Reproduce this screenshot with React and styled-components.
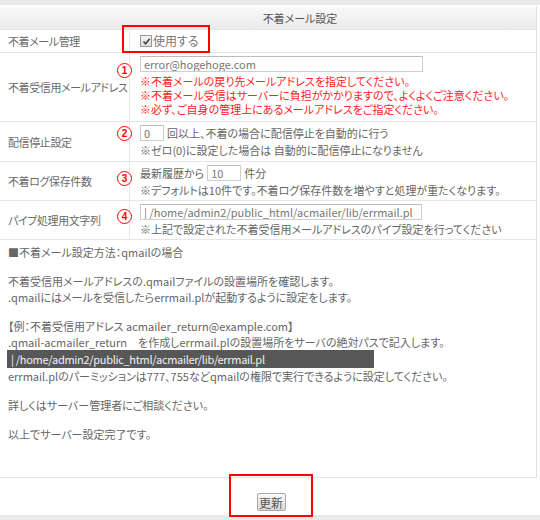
import React from "react";
import styled, { createGlobalStyle } from "styled-components";

const GlobalStyle = createGlobalStyle`
  html, body {
    margin: 0;
    padding: 0;
    background: #fff;
  }
  body {
    font-family: "Noto Sans CJK JP", "Liberation Sans", sans-serif;
    font-size: 11px;
    color: #666;
    font-feature-settings: "palt";
  }
`;

const Page = styled.div`
  width: 540px;
  height: 520px;
  overflow: hidden;
  display: flex;
  flex-direction: column;
`;

const Strip = styled.div`
  height: 5px;
  background: #e9e9e9;
  flex-shrink: 0;
`;

const Sheet = styled.div`
  width: 536px;
  border-right: 1px solid #e2e2e2;
  margin-top: 1px;
`;

const Header = styled.div`
  height: 23px;
  display: flex;
  align-items: center;
  justify-content: center;
  padding-left: 64px;
  background: linear-gradient(#fafafa, #eaeaea);
  border-bottom: 1px solid #e4e4e4;
  color: #555;
`;

const Row = styled.div`
  display: grid;
  grid-template-columns: 130px 1fr;
  min-height: ${(p) => p.$h - 1}px;
  border-bottom: 1px solid #e6e6e6;
`;

const Label = styled.div`
  display: flex;
  align-items: center;
  padding-left: 8px;
  border-right: 1px solid #e6e6e6;
  white-space: nowrap;
  letter-spacing: -0.4px;
  color: #6a6a6a;
`;

const Value = styled.div`
  position: relative;
  display: flex;
  flex-direction: column;
  justify-content: ${(p) => (p.$center ? "center" : "flex-start")};
  padding: ${(p) => (p.$center ? "0 0 0 10px" : "3px 0 3px 10px")};
  line-height: 14px;
`;

const Line = styled.div`
  display: flex;
  gap: 3px;
  min-height: ${(p) => (p.$field ? 18 : 14)}px;
  align-items: ${(p) => (p.$field ? "flex-start" : "center")};
  line-height: ${(p) => (p.$field ? 16 : 14)}px;
  color: ${(p) => (p.$warn ? "#f22" : "inherit")};
  white-space: nowrap;
`;

const Field = styled.input`
  box-sizing: border-box;
  width: ${(p) => p.$w}px;
  height: 16px;
  margin: 0;
  padding: 0 3px;
  border: 1px solid #cfcfcf;
  border-top-color: #bdbdbd;
  font: inherit;
  font-size: 11px;
  color: #777;
  background: #fff;
  outline: none;
`;

const CheckLabel = styled.label`
  display: flex;
  align-items: center;
  gap: 1px;
  font-size: 12px;
  color: #777;
`;

const Box = styled.span`
  width: 10px;
  height: 10px;
  border: 1px solid #999;
  background: linear-gradient(#f4f4f4, #ddd);
  display: flex;
  align-items: center;
  justify-content: center;
`;

const Num = styled.span`
  position: absolute;
  left: -13px;
  top: ${(p) => p.$top - 1}px;
  width: 13px;
  height: 13px;
  border: 1.5px solid #f00;
  border-radius: 50%;
  color: #f00;
  font-family: "Liberation Sans", sans-serif;
  font-weight: bold;
  font-size: 10px;
  line-height: 13px;
  text-align: center;
  background: #fff;
`;

const Mark = styled.div`
  position: absolute;
  border: 2px solid #f00;
  pointer-events: none;
`;

const Guide = styled.div`
  width: 528px;
  height: 233px;
  padding: 4px 0 0 8px;
  border-right: 1px solid #e2e2e2;
  border-bottom: 1px solid #e2e2e2;
  line-height: 16px;
  p {
    margin: 0;
    white-space: nowrap;
  }
  p + p {
    margin-top: 13px;
  }
`;

const Code = styled.div`
  width: 363px;
  height: 18px;
  margin-left: -1px;
  padding-left: 4px;
  background: #575757;
  color: #f2f2f2;
  font-size: 11px;
  line-height: 18px;
  letter-spacing: -0.3px;
`;

const Footer = styled.div`
  position: relative;
  height: 37px;
  display: flex;
  justify-content: center;
  align-items: flex-end;
  padding-left: 2px;
`;

const Button = styled.button`
  width: 29px;
  height: 18px;
  margin-bottom: 4px;
  padding: 0;
  border: 1px solid #a8a8a8;
  border-radius: 2px;
  background: linear-gradient(#fbfbfb, #d8d8d8);
  font: inherit;
  font-size: 12px;
  color: #555;
`;

export default function App() {
  return (
    <Page>
      <GlobalStyle />
      <Strip />
      <Sheet>
        <Header>不着メール設定</Header>
        <Row $h={23}>
          <Label>不着メール管理</Label>
          <Value $center>
            <CheckLabel>
              <Box>
                <svg width="9" height="9" viewBox="0 0 9 9">
                  <path d="M1.5 4.5 L3.6 6.8 L7.8 1.8" fill="none" stroke="#444" strokeWidth="1.6" />
                </svg>
              </Box>
              使用する
            </CheckLabel>
            <Mark style={{ left: -8, top: -5, width: 84, height: 24 }} />
          </Value>
        </Row>
        <Row $h={69}>
          <Label>不着受信用メールアドレス</Label>
          <Value>
            <Num $top={11}>1</Num>
            <Line $field>
              <Field $w={283} defaultValue="error@hogehoge.com" />
            </Line>
            <Line $warn>※不着メールの戻り先メールアドレスを指定してください。</Line>
            <Line $warn>※不着メール受信はサーバーに負担がかかりますので、よくよくご注意ください。</Line>
            <Line $warn>※必ず、ご自身の管理上にあるメールアドレスをご指定ください。</Line>
          </Value>
        </Row>
        <Row $h={40}>
          <Label>配信停止設定</Label>
          <Value>
            <Num $top={5}>2</Num>
            <Line $field>
              <Field $w={24} defaultValue="0" />
              回以上、不着の場合に配信停止を自動的に行う
            </Line>
            <Line>※ゼロ(0)に設定した場合は 自動的に配信停止になりません</Line>
          </Value>
        </Row>
        <Row $h={39}>
          <Label>不着ログ保存件数</Label>
          <Value>
            <Num $top={10}>3</Num>
            <Line $field>
              最新履歴から
              <Field $w={34} defaultValue="10" />
              件分
            </Line>
            <Line>※デフォルトは10件です。不着ログ保存件数を増やすと処理が重たくなります。</Line>
          </Value>
        </Row>
        <Row $h={39}>
          <Label>パイプ処理用文字列</Label>
          <Value>
            <Num $top={9}>4</Num>
            <Line $field>
              <Field $w={282} defaultValue="| /home/admin2/public_html/acmailer/lib/errmail.pl" />
            </Line>
            <Line>※上記で設定された不着受信用メールアドレスのパイプ設定を行ってください</Line>
          </Value>
        </Row>
      </Sheet>
      <Guide>
        <p>■不着メール設定方法：qmailの場合</p>
        <p>
          不着受信用メールアドレスの.qmailファイルの設置場所を確認します。
          <br />
          .qmailにはメールを受信したらerrmail.plが起動するように設定をします。
        </p>
        <p>
          【例：不着受信用アドレス acmailer_return@example.com】
          <br />
          .qmail-acmailer_return　を作成しerrmail.plの設置場所をサーバの絶対パスで記入します。
          <Code>| /home/admin2/public_html/acmailer/lib/errmail.pl</Code>
          errmail.plのパーミッションは777、755などqmailの権限で実行できるように設定してください。
        </p>
        <p>詳しくはサーバー管理者にご相談ください。</p>
        <p>以上でサーバー設定完了です。</p>
      </Guide>
      <Footer>
        <Button>更新</Button>
        <Mark style={{ left: 229, top: -4, width: 80, height: 39 }} />
      </Footer>
      <Strip />
    </Page>
  );
}
